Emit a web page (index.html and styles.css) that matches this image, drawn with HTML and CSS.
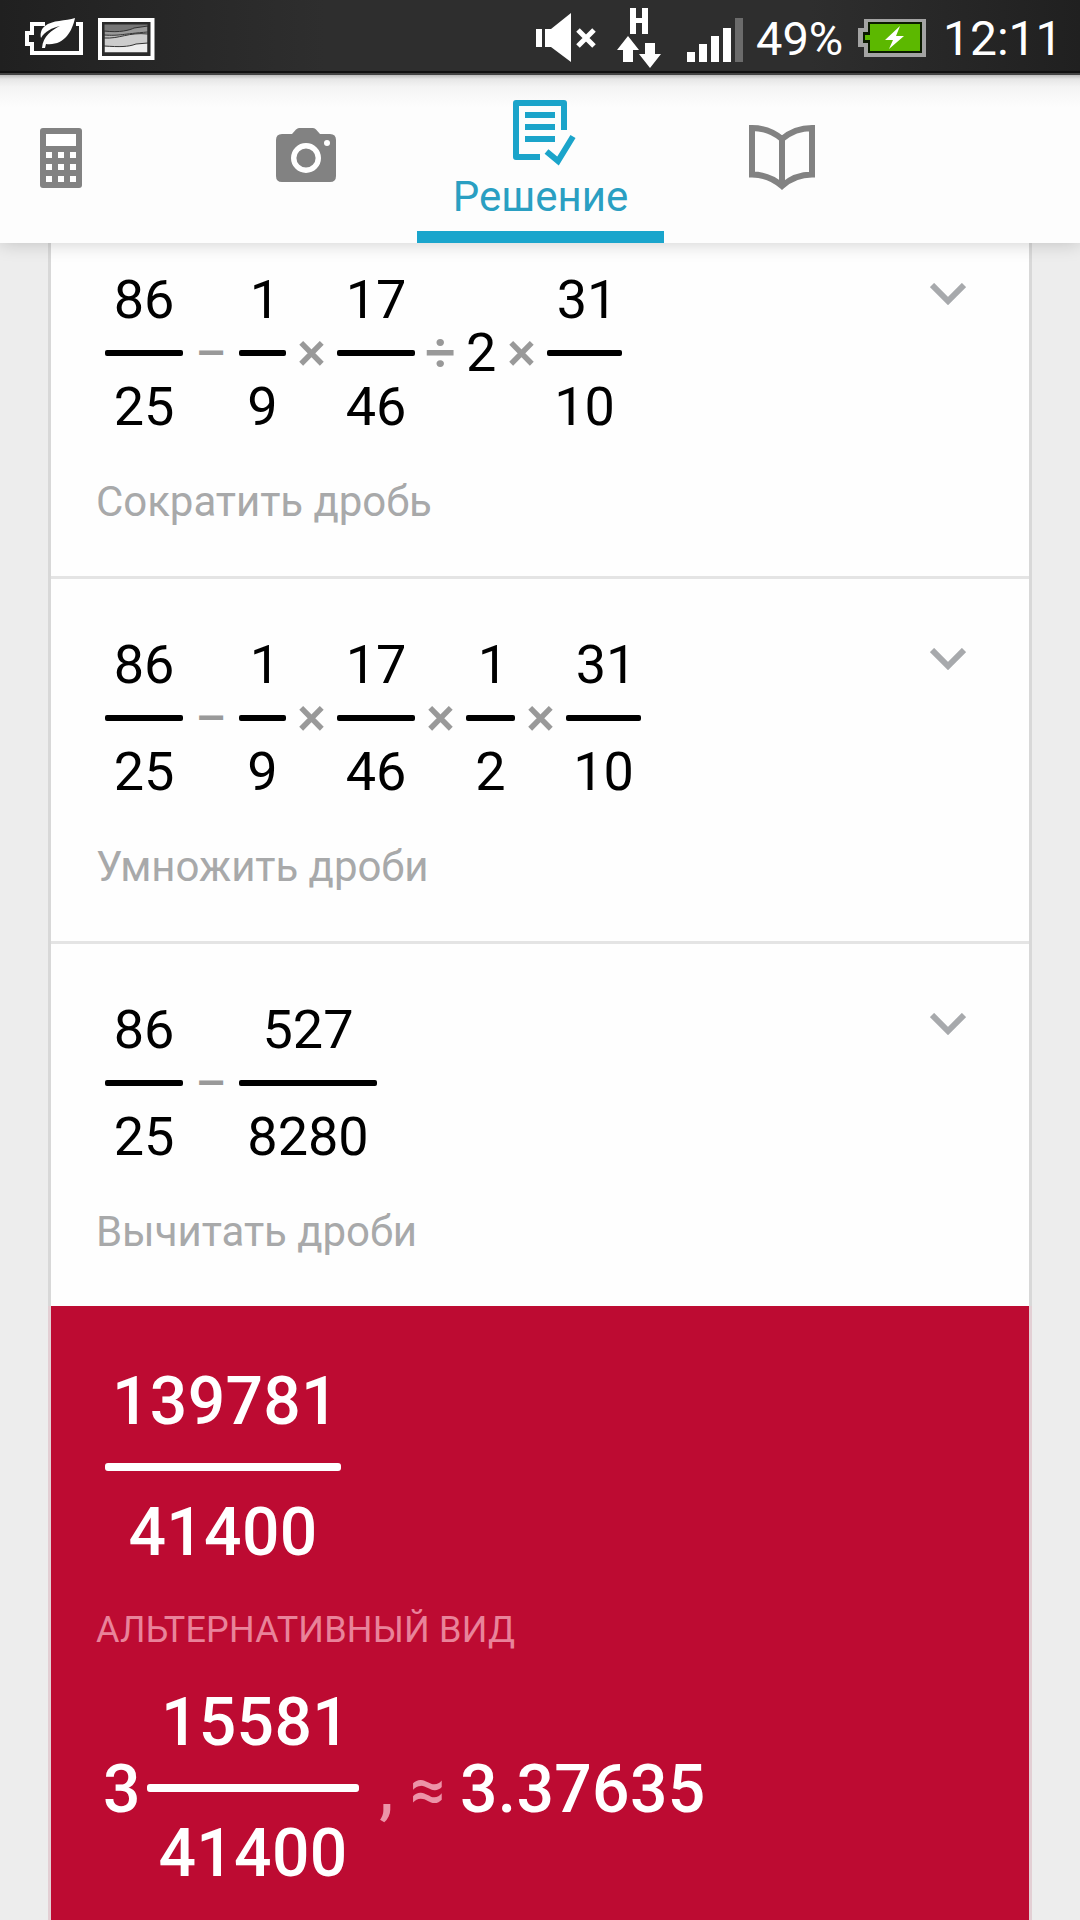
FILE: index.html
```html
<!DOCTYPE html>
<html lang="ru">
<head>
    <meta charset="UTF-8">
    <title>Решение</title>
    <link rel="stylesheet" href="styles.css">
</head>
<body>

    <!-- Status Bar -->
    <div class="status-bar">
        <div class="status-left">
            <svg width="58" height="71" viewBox="25 0 58 71">
                <path d="M45 24H32V33H27V44H32V53H81V24H76" fill="none" stroke="#fff" stroke-width="4"/>
                <path d="M75 18C66 21 52 20 45 26C41 29 40 34 41 38C45 31 52 28 60 26C52 30 43 36 42 48H45L46 44C64 46 72 32 75 18Z" fill="#fff"/>
            </svg>
            <svg width="57" height="71" viewBox="98 0 57 71">
                <rect x="100" y="20" width="52.500" height="38" fill="#2b2b2b" stroke="#fff" stroke-width="4"/>
                <rect x="104" y="24" width="44" height="29" fill="#777"/>
                <path d="M104 31C120 33 130 30 134 28L148 26V53H104Z" fill="#999" stroke="#333"/>
                <path d="M104 35C120 36 122 34 148 32V53H104Z" fill="#bbb" stroke="#333"/>
                <path d="M104 38C120 39 128 32 148 34V53H104Z" fill="#ccc" stroke="#333"/>
                <path d="M104 46C120 47 128 47 136 44L148 43V53H104Z" fill="#eee" stroke="#333"/>
                <rect x="103.500" y="23.500" width="45" height="30" fill="none" stroke="#2b2b2b" stroke-width="2"/>
            </svg>
        </div>
        <div class="status-right">
            <svg width="60" height="71" viewBox="536 0 60 71">
                <path d="M536 29H542V47H536ZM545 29H551L571 13V62L551 47H545Z" fill="#fff"/>
                <path d="M578 30L594 46M594 30L578 46" stroke="#fff" stroke-width="5"/>
            </svg>
            <svg class="net" width="44" height="71" viewBox="617 0 44 71" fill="#fff">
                <path d="M630 8H636V18H642V8H648V34H642V23H636V34H630Z"/>
                <path d="M628 36L639 50H633V62H623V50H617Z"/>
                <path d="M645 43H655V54H661L650 68L639 54H645Z"/>
            </svg>
            <svg class="signal" width="56" height="71" viewBox="687 0 56 71" fill="#fff">
                <path d="M687 52H695V62H687ZM699 44H707V62H699ZM711 36H719V62H711ZM723 28H731V62H723Z"/>
                <path d="M735 18H743V62H735Z" fill="#6b6b6b"/>
            </svg>
            <span class="percent">49%</span>
            <svg width="68" height="71" viewBox="858 0 68 71">
                <path d="M864 19H926V57H864V47H858V28H864Z" fill="#a3a3a3"/>
                <path d="M868 22H922V53H868V43H863V32H868Z" fill="#0b1a00"/>
                <path d="M870 24H920V51H870V40H865V35H870Z" fill="#5cb800"/>
                <path d="M900 26L885 40H893L889 49L904 36H896Z" fill="#fff"/>
            </svg>
            <span class="clock">12:11</span>
        </div>
    </div>

    <!-- Tabs -->
    <div class="tabs">
        <div class="tab tab-calc">
            <svg width="42" height="60" viewBox="0 0 42 60">
                <rect width="42" height="60" rx="3" fill="#828282"/>
                <path d="M6 6H36V18H6ZM6 24H12V30H6ZM18 24H24V30H18ZM30 24H36V30H30ZM6 36H12V42H6ZM18 36H24V42H18ZM30 36H36V42H30ZM6 48H12V54H6ZM18 48H24V54H18ZM30 48H36V54H30Z" fill="#fff"/>
            </svg>
        </div>
        <div class="tab tab-camera">
            <svg width="60" height="54" viewBox="0 0 60 54">
                <path d="M6 6H16L20 1.500Q21.500 0 23 0H37Q39 0 40 1.500L44 6H54Q60 6 60 12V48Q60 54 54 54H6Q0 54 0 48V12Q0 6 6 6Z" fill="#828282"/>
                <circle cx="30" cy="30" r="12.300" fill="none" stroke="#fff" stroke-width="5.400"/>
                <circle cx="51" cy="15" r="3" fill="#fff"/>
            </svg>
        </div>
        <div class="tab tab-solution active">
            <svg width="63" height="66" viewBox="0 0 63 66" fill="none" stroke="#1ba4ca" stroke-width="6">
                <path d="M27 57H3V3H51V30" stroke-linejoin="round"/>
                <path d="M12 15H42M12 27H42M12 39H42"/>
                <path d="M33.500 51.500L45 61L60 36.500"/>
            </svg>
            <span>Решение</span>
        </div>
        <div class="tab tab-book">
            <svg width="66" height="66" viewBox="0 0 66 66" fill="none" stroke="#828282" stroke-width="6">
                <path d="M33 14Q20 3 3 3V49.500Q20 49.500 33 61Q46 49.500 63 49.500V3Q46 3 33 14V61"/>
            </svg>
        </div>
    </div>

    <!-- Solution steps -->
    <div class="content">
        <div class="step">
            <div class="expr">
                <div class="frac two"><span>86</span><i></i><span>25</span></div>
                <span class="op minus">–</span>
                <div class="frac one"><span class="odd">1</span><i></i><span>9</span></div>
                <span class="op">×</span>
                <div class="frac two"><span>17</span><i></i><span>46</span></div>
                <span class="op">÷</span>
                <span class="num">2</span>
                <span class="op">×</span>
                <div class="frac ten"><span class="odd">31</span><i></i><span>10</span></div>
            </div>
            <div class="hint">Сократить дробь</div>
            <svg class="arrow" width="36" height="22" viewBox="0 0 36 22"><path d="M2 2L18 18L34 2" fill="none" stroke="#a7a9ac" stroke-width="6"/></svg>
        </div>

        <div class="step">
            <div class="expr">
                <div class="frac two"><span>86</span><i></i><span>25</span></div>
                <span class="op minus">–</span>
                <div class="frac one"><span class="odd">1</span><i></i><span>9</span></div>
                <span class="op">×</span>
                <div class="frac two"><span>17</span><i></i><span>46</span></div>
                <span class="op">×</span>
                <div class="frac half"><span class="odd">1</span><i></i><span>2</span></div>
                <span class="op">×</span>
                <div class="frac ten"><span class="odd">31</span><i></i><span>10</span></div>
            </div>
            <div class="hint">Умножить дроби</div>
            <svg class="arrow" width="36" height="22" viewBox="0 0 36 22"><path d="M2 2L18 18L34 2" fill="none" stroke="#a7a9ac" stroke-width="6"/></svg>
        </div>

        <div class="step last">
            <div class="expr">
                <div class="frac two"><span>86</span><i></i><span>25</span></div>
                <span class="op minus">–</span>
                <div class="frac four"><span>527</span><i></i><span>8280</span></div>
            </div>
            <div class="hint">Вычитать дроби</div>
            <svg class="arrow" width="36" height="22" viewBox="0 0 36 22"><path d="M2 2L18 18L34 2" fill="none" stroke="#a7a9ac" stroke-width="6"/></svg>
        </div>

        <!-- Result -->
        <div class="result">
            <div class="expr">
                <div class="frac six"><span class="odd">139781</span><i></i><span>41400</span></div>
            </div>
            <div class="alt">АЛЬТЕРНАТИВНЫЙ ВИД</div>
            <div class="expr">
                <span class="whole">3</span>
                <div class="frac five"><span class="odd">15581</span><i></i><span>41400</span></div>
                <span class="comma">,</span>
                <span class="approx">≈</span>
                <span class="decimal">3.37635</span>
            </div>
        </div>
    </div>

</body>
</html>
```
FILE: styles.css
```css
/* General Styling */
body {
    margin: 0;
    height: 1920px;
    overflow: hidden;
    display: flex;
    flex-direction: column;
    font-family: Roboto, "Noto Sans", sans-serif;
    background-color: #ededed;
}

svg { display: block; flex: none; }

/* Status bar */
.status-bar {
    flex: none;
    box-sizing: border-box;
    height: 75px;
    padding: 0 26px 0 25px;
    display: flex;
    justify-content: space-between;
    background: linear-gradient(90deg, #202020, #2e2e2e 30%, #2e2e2e 75%, #202020);
    border-bottom: 2px solid #444;
    box-shadow: inset 0 -2px 0 #111;
    color: #fff;
}

.status-left {
    display: flex;
    gap: 15px;
}

.status-right {
    display: flex;
    font-size: 48px;
    line-height: 78px;
}

.net { margin-left: 21px; }
.signal { margin-left: 26px; }

.percent {
    width: 102px;
    margin-left: 13px;
    font-size: 47px;
}

.clock {
    width: 111px;
    margin-left: 17px;
    white-space: nowrap;
}

/* Tabs */
.tabs {
    flex: none;
    height: 168px;
    display: flex;
    background: linear-gradient(#bdbdbd, #e6e6e6 4px, #f4f4f4 12px, #fdfdfd 32px);
    position: relative;
    z-index: 1;
    box-shadow: 0 0 18px rgba(0, 0, 0, 0.2);
    clip-path: inset(0 0 -20px 0);
}

.tab {
    box-sizing: border-box;
    display: flex;
    flex-direction: column;
    align-items: center;
}

.tab-calc {
    width: 195px;
    padding: 53px 0 0 40px;
    align-items: flex-start;
}

.tab-camera {
    width: 222px;
    padding-top: 53px;
}

.tab-solution {
    width: 247px;
    padding-top: 25px;
    color: #2a9fc2;
    font-size: 42px;
    line-height: 42px;
}

.tab-solution svg { margin-left: 8px; }
.tab-solution span { margin-top: 10px; }

.tab.active { border-bottom: 12px solid #1aa5cc; }

.tab-book {
    width: 236px;
    padding-top: 50px;
}

/* Steps */
.content {
    flex: 1;
    overflow: hidden;
    padding: 0 48px;
}

.step {
    box-sizing: border-box;
    height: 365px;
    padding: 59px 0 0 45px;
    position: relative;
    background-color: #fefefe;
    border: 3px solid #d8d8d8;
    border-width: 0 3px;
    box-shadow: inset 0 -3px 0 #e4e4e4;
}

.step:first-child { margin-top: -29px; }

.step.last {
    height: 362px;
    box-shadow: none;
}

.arrow {
    position: absolute;
    top: 69px;
    right: 63px;
}

.expr {
    display: flex;
    align-items: center;
    margin-left: 9px;
    font-size: 54px;
    line-height: 54px;
    color: #000;
}

.frac {
    display: flex;
    flex-direction: column;
    align-items: center;
    flex: none;
}

.frac i {
    align-self: stretch;
    height: 6px;
    margin: 23px 0 24px;
    border-radius: 2px;
    background-color: #000;
}

/* numerators that end in 1 sit a little to the right */
.odd { padding-left: 5px; }

.one { width: 47px; }
.half { width: 49px; }
.two { width: 78px; }
.ten { width: 75px; }
.four { width: 138px; }

.op {
    width: 51px;
    padding-bottom: 2px;
    text-align: center;
    font-weight: 500;
    color: #999;
}

.minus {
    width: 56px;
    padding-bottom: 0;
    font-size: 48px;
}

.num {
    width: 30px;
    padding-bottom: 2px;
    text-align: center;
}

.hint {
    margin-top: 47px;
    font-size: 42px;
    line-height: 42px;
    letter-spacing: -0.05px;
    color: #a8a9aa;
}

/* Result */
.result {
    height: 640px;
    box-sizing: border-box;
    padding: 63px 0 0 45px;
    background-color: #bd0b32;
    background-clip: padding-box;
    border: 3px solid #e3cfd4;
    border-width: 0 3px;
}

.result .expr {
    font-size: 66px;
    line-height: 66px;
    font-weight: 500;
    letter-spacing: 0.3px;
    color: #fff;
}

.result .frac i {
    height: 8px;
    margin: 28px 0 29px;
    border-radius: 3px;
    background-color: #fff;
}

.six { width: 236px; }
.five { width: 212px; }

.alt {
    margin: 46px 0 42px;
    font-size: 36px;
    line-height: 36px;
    letter-spacing: 0.2px;
    color: #e9839a;
}

.whole {
    width: 42px;
    margin-left: -2px;
    margin-right: 2px;
}

.whole,
.decimal { padding-top: 2px; }

.comma,
.approx {
    padding-top: 3px;
    color: #ec94a8;
}

.comma {
    width: 31px;
    margin-left: 20px;
}

.approx {
    width: 50px;
    font-size: 62px;
}
```
